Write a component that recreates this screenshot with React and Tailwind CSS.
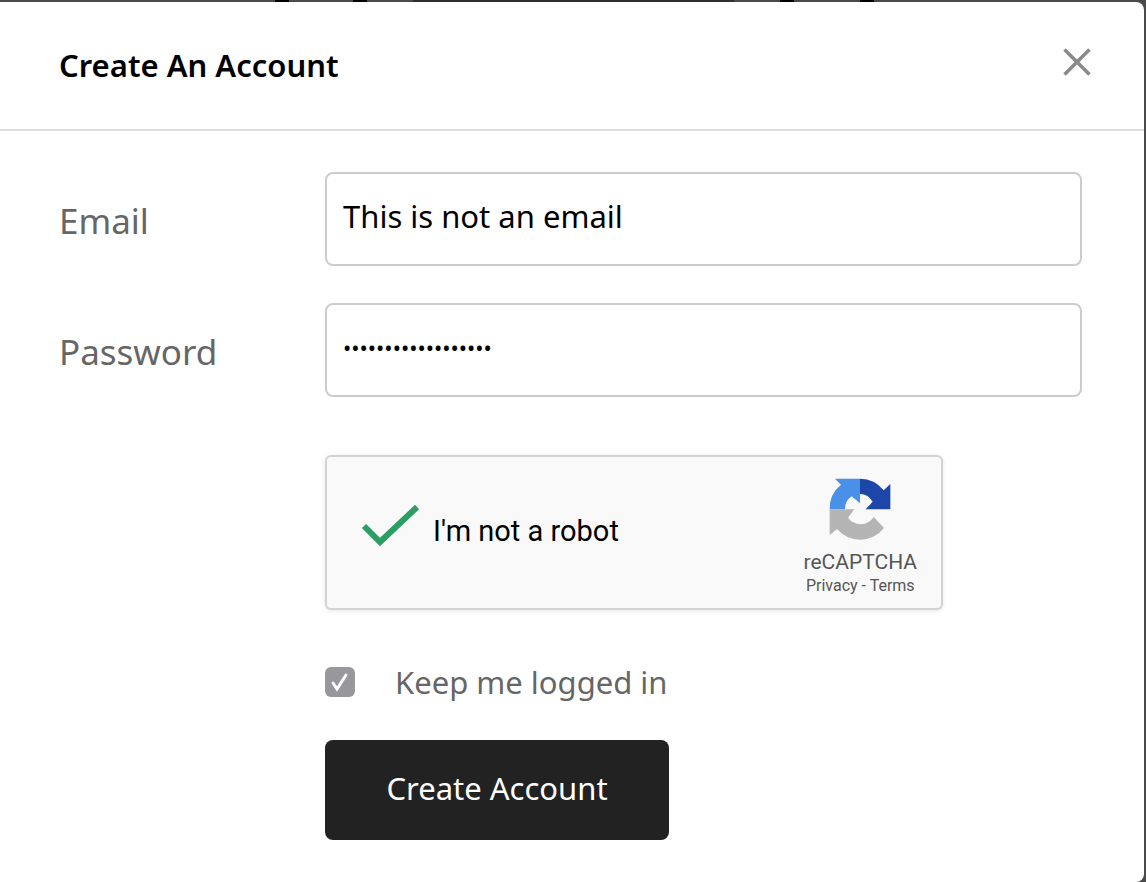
import React, { useState } from 'react'

// Parts of the dimmed page that show above the dialog
function PageBehind() {
  return (
    <div className="flex h-0.5 shrink-0 bg-[#4b4a4a]">
      <div className="w-[24%]" />
      <div className="w-3.5 bg-black" />
      <div className="w-16" />
      <div className="w-3.5 bg-black" />
      <div className="w-[46px]" />
      <div className="w-[28%] bg-[#302e2e]" />
      <div className="w-[46px]" />
      <div className="w-3.5 bg-black" />
      <div className="w-[66px]" />
      <div className="w-3.5 bg-black" />
    </div>
  )
}

function CloseIcon() {
  return (
    <svg className="h-7 w-7" viewBox="0 0 28 28" fill="none" stroke="#8a8a8a" strokeWidth="3.6">
      <path d="M1.5 1.5l25 25M26.5 1.5l-25 25" />
    </svg>
  )
}

function RecaptchaLogo() {
  return (
    <svg className="h-[62px] w-[62px]" viewBox="0 0 186 186" aria-hidden="true">
      <path fill="#4a90e8" d="M2 94A91 91 0 0 1 36 20L18 2H93V76L68 55A46 46 0 0 0 48 94Z" />
      <path fill="#1c46a8" d="M93 2A91 91 0 0 1 164 37L184 18V94H110L131 71A46 46 0 0 0 93 48Z" />
      <path fill="#b4b4b4" d="M2 94H76L57 119A46 46 0 0 0 134 117L165 150A91 91 0 0 1 24 153L2 171Z" />
    </svg>
  )
}

function Recaptcha({ checked, onChange }) {
  return (
    <div className="flex h-[155px] w-full max-w-[618px] items-center justify-between rounded-md border-2 border-[#d3d3d3] bg-[#f9f9f9] pr-6 pl-[34px] font-[Roboto,sans-serif] shadow-[0_1px_4px_rgba(0,0,0,0.1)]">
      <label className="flex items-center pb-1 text-[29px] leading-8 text-black">
        <span className="relative mr-3 mb-2 h-[46px] w-[60px]">
          <input
            type="checkbox"
            checked={checked}
            onChange={onChange}
            className="h-full w-full appearance-none"
          />
          {checked && (
            <svg className="pointer-events-none absolute inset-0" viewBox="0 0 60 46" fill="none" stroke="#2b9f63" strokeWidth="6">
              <path d="M3 22l16 16L56 3" />
            </svg>
          )}
        </span>
        I'm not a robot
      </label>

      <div className="flex flex-col items-center pt-2.5 text-[#555]">
        <RecaptchaLogo />
        <p className="mt-2.5 text-[21px] leading-6">reCAPTCHA</p>
        <p className="text-base leading-6">
          <a href="#privacy">Privacy</a> - <a href="#terms">Terms</a>
        </p>
      </div>
    </div>
  )
}

function Field({ id, label, textSize, ...props }) {
  return (
    <div className="flex items-center">
      <label htmlFor={id} className="w-[266px] shrink-0 pt-1 text-[35px] leading-10 text-[#666]">
        {label}
      </label>
      <input
        id={id}
        className={`h-[94px] min-w-0 flex-1 rounded-lg border-2 border-[#ccc] bg-white px-4 pb-1.5 text-black outline-none ${textSize}`}
        {...props}
      />
    </div>
  )
}

export default function App() {
  const [email, setEmail] = useState('This is not an email')
  const [password, setPassword] = useState('correcthorsebatter')
  const [human, setHuman] = useState(true)
  const [keepLogged, setKeepLogged] = useState(true)

  return (
    <div className="flex min-h-screen flex-col bg-[#4b4a4a] font-['Noto_Sans',sans-serif]">
      <PageBehind />

      <div className="mr-0.5 flex-1 rounded-r-lg bg-white">
        <header className="flex items-center justify-between border-b-2 border-[#ddd] py-9 pr-[53px] pl-[59px]">
          <h1 className="text-[31px] leading-[55px] font-semibold text-black">Create An Account</h1>
          <button type="button" aria-label="Close" className="mb-2">
            <CloseIcon />
          </button>
        </header>

        <form className="pt-[41px] pr-[62px] pb-10 pl-[59px]" onSubmit={e => e.preventDefault()}>
          <div className="flex flex-col gap-[37px]">
            <Field id="email" label="Email" type="text" textSize="text-[31px]" value={email} onChange={e => setEmail(e.target.value)} />
            <Field id="password" label="Password" type="password" textSize="text-[22px]" value={password} onChange={e => setPassword(e.target.value)} />
          </div>

          <div className="ml-[266px] flex flex-col items-start pt-[58px]">
            <Recaptcha checked={human} onChange={e => setHuman(e.target.checked)} />

            <label className="mt-12 flex items-center text-[31px] leading-12 text-[#666]">
              <span className="relative mr-10 h-[30px] w-[30px]">
                <input
                  type="checkbox"
                  checked={keepLogged}
                  onChange={e => setKeepLogged(e.target.checked)}
                  className="block h-full w-full appearance-none rounded-md bg-[#98979c]"
                />
                {keepLogged && (
                  <svg className="pointer-events-none absolute inset-0" viewBox="0 0 30 30" fill="none" stroke="white" strokeWidth="3" strokeLinecap="round">
                    <path d="M8 16l4 6L21 8" />
                  </svg>
                )}
              </span>
              Keep me logged in
            </label>

            <button type="submit" className="mt-[34px] h-[100px] w-[344px] rounded-lg bg-[#222] pb-1 text-[31px] text-white">
              Create Account
            </button>
          </div>
        </form>
      </div>
    </div>
  )
}
